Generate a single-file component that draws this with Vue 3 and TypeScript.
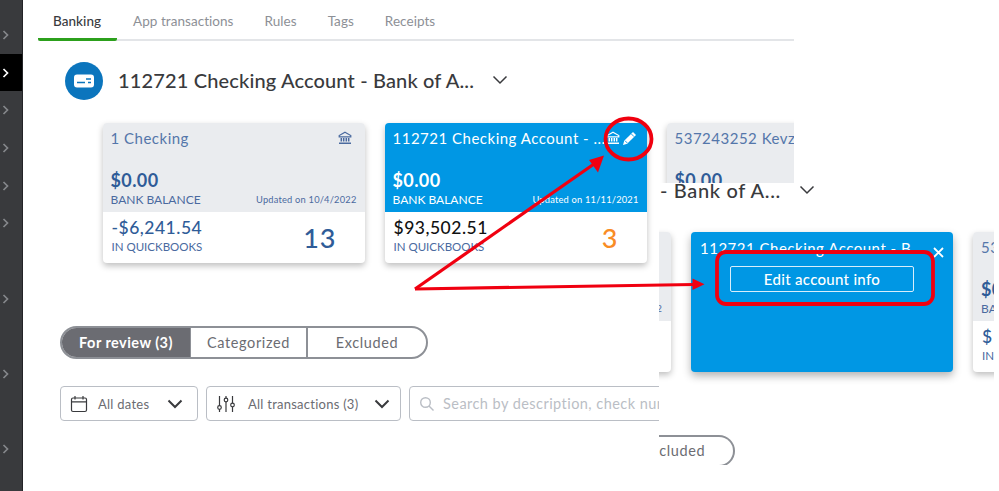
<script setup lang="ts">
const sideRows = [
  { icon: true }, { icon: true, active: true }, { icon: true }, { icon: true }, { icon: true }, { icon: true },
  { icon: false }, { icon: true }, { icon: false }, { icon: true }, { icon: false }, { icon: true },
]
const tabs = ['Banking', 'App transactions', 'Rules', 'Tags', 'Receipts']

const cards = [
  { name: '1 Checking', bank: '$0.00', updated: 'Updated on 10/4/2022', books: '-$6,241.54', count: '13', kind: '' },
  { name: '112721 Checking Account - ...', bank: '$0.00', updated: 'Updated on 11/11/2021', books: '$93,502.51', count: '3', kind: 'selected' },
  { name: '537243252 Kevz Bank', bank: '$0.00', updated: '', books: '', count: '', kind: '' },
]
</script>

<template>
  <div class="shot">
    <aside class="side">
      <div v-for="(row, i) in sideRows" :key="i" class="side-row" :class="{ active: row.active }">
        <svg v-if="row.icon" width="7" height="10" viewBox="0 0 7 10"><path d="M1.5 1l4 4-4 4" fill="none" stroke="currentColor" stroke-width="1.7" /></svg>
      </div>
    </aside>

    <main class="page">
      <nav class="tabs">
        <span v-for="(t, i) in tabs" :key="t" class="tab" :class="{ on: i === 0 }">{{ t }}</span>
      </nav>

      <div class="account">
        <div class="account-icon">
          <svg width="22" height="16" viewBox="0 0 22 16"><rect x="1" y="1.5" width="20" height="13" rx="3" fill="#fff" /><path d="M4 9.5h8M13 6h5M15 9.5h3" stroke="#0b75bd" stroke-width="1.4" /></svg>
        </div>
        <h1 class="account-name">112721 Checking Account - Bank of A...</h1>
        <svg class="account-caret" width="16" height="10" viewBox="0 0 16 10"><path d="M1.5 1.5L8 8l6.5-6.5" fill="none" stroke="#393a3d" stroke-width="1.5" /></svg>
      </div>

      <div class="cards">
        <section v-for="c in cards" :key="c.name" class="card" :class="c.kind">
          <div class="card-top">
            <div class="card-head">
              <span class="card-name">{{ c.name }}</span>
              <svg v-if="c.books" class="bank" width="14" height="14" viewBox="0 0 14 14">
                <path d="M7 1.2L12.8 4.6v1.2H1.2V4.6z" fill="none" stroke="currentColor" stroke-width="1.2" />
                <path d="M3.3 7v3.5M5.7 7v3.5M8.3 7v3.5M10.7 7v3.5M1 12.3h12" stroke="currentColor" stroke-width="1.5" />
              </svg>
              <svg v-if="c.kind" class="pencil" width="15" height="15" viewBox="0 0 15 15">
                <path d="M11 1l3 3-8.8 8.8L1 14l1.2-4.2z" fill="#fff" />
                <path d="M9.3 2.9l2.8 2.8M3 9.7l2.3 2.3" stroke="#0097e4" stroke-width="0.9" />
              </svg>
            </div>
            <div class="bank-sum">{{ c.bank }}</div>
            <div class="bank-row">
              <span>BANK BALANCE</span>
              <span class="updated">{{ c.updated }}</span>
            </div>
          </div>
          <div class="card-bottom">
            <div>
              <div class="books-sum">{{ c.books }}</div>
              <div class="books-label">IN QUICKBOOKS</div>
            </div>
            <div class="count">{{ c.count }}</div>
          </div>
        </section>
      </div>

      <div class="seg">
        <span class="seg-item on">For review (3)</span>
        <span class="seg-item mid">Categorized</span>
        <span class="seg-item last">Excluded</span>
      </div>

      <div class="filters">
        <div class="filter dates">
          <svg width="18" height="18" viewBox="0 0 18 18"><rect x="1.5" y="3" width="15" height="13.5" rx="1.5" fill="none" stroke="#393a3d" stroke-width="1.2" /><path d="M1.5 6.8h15M5 1v3.5M13 1v3.5" stroke="#393a3d" stroke-width="1.2" /></svg>
          <span>All dates</span>
          <svg class="caret" width="16" height="10" viewBox="0 0 16 10"><path d="M1.5 1.5L8 8l6.5-6.5" fill="none" stroke="#393a3d" stroke-width="2" /></svg>
        </div>
        <div class="filter trans">
          <svg width="20" height="18" viewBox="0 0 20 18"><path d="M3.5 1v16M10 1v16M16.5 1v16" stroke="#393a3d" stroke-width="1.2" /><circle cx="3.5" cy="12.5" r="1.8" fill="#fff" stroke="#393a3d" stroke-width="1.2" /><circle cx="10" cy="5" r="1.8" fill="#fff" stroke="#393a3d" stroke-width="1.2" /><circle cx="16.5" cy="10" r="1.8" fill="#fff" stroke="#393a3d" stroke-width="1.2" /></svg>
          <span>All transactions (3)</span>
          <svg class="caret" width="16" height="10" viewBox="0 0 16 10"><path d="M1.5 1.5L8 8l6.5-6.5" fill="none" stroke="#393a3d" stroke-width="2" /></svg>
        </div>
        <div class="filter search">
          <svg width="16" height="16" viewBox="0 0 16 16"><circle cx="6.5" cy="6.5" r="4.8" fill="none" stroke="#babec5" stroke-width="1.4" /><path d="M10 10l4.5 4.5" stroke="#babec5" stroke-width="1.4" /></svg>
          <span>Search by description, check number, amount</span>
        </div>
      </div>
    </main>

    <!-- second screenshot pasted over the first one -->
    <div class="paste">
      <div class="paste-head">
        <span>- Bank of A...</span>
        <svg width="16" height="10" viewBox="0 0 16 10"><path d="M1.5 1.5L8 8l6.5-6.5" fill="none" stroke="#393a3d" stroke-width="1.5" /></svg>
      </div>
      <div class="paste-cards">
        <section class="card ghost-left">
          <div class="card-top"><div class="bank-row"><span></span><span class="updated">2</span></div></div>
          <div class="card-bottom"></div>
        </section>
        <section class="card open">
          <div class="open-name">112721 Checking Account - B</div>
          <svg class="close" width="11" height="11" viewBox="0 0 11 11"><path d="M1 1l9 9M10 1l-9 9" stroke="#fff" stroke-width="1.8" /></svg>
          <button class="edit">Edit account info</button>
        </section>
        <section class="card ghost-right">
          <div class="card-top">
            <div class="card-head"><span class="card-name">53</span></div>
            <div class="bank-sum">$0</div>
            <div class="bank-row"><span>BA</span></div>
          </div>
          <div class="card-bottom">
            <div>
              <div class="books-sum">$</div>
              <div class="books-label">IN</div>
            </div>
          </div>
        </section>
      </div>
      <div class="paste-seg">Excluded</div>
    </div>

    <svg class="marks" width="999" height="491" viewBox="0 0 999 491">
      <ellipse cx="628.5" cy="139" rx="23" ry="20.5" fill="none" stroke="#f0000f" stroke-width="3.8" />
      <path d="M415 289L594 164" stroke="#f00010" stroke-width="3.2" />
      <path d="M604 155.5L589 160L598 172.5z" fill="#f00010" />
      <path d="M415 289L694 284.5" stroke="#f00010" stroke-width="3.2" />
      <path d="M704.5 284.3L692.5 278.5L692.5 290z" fill="#f00010" />
      <rect x="717" y="252" width="216" height="52" rx="9" fill="none" stroke="#f0000f" stroke-width="3.8" />
    </svg>
  </div>
</template>

<style scoped>
.shot {
  position: relative;
  width: 999px;
  height: 491px;
  display: flex;
  overflow: hidden;
  background: #fff;
  color: #393a3d;
  font-family: Lato, "Open Sans", sans-serif;
}
.side {
  width: 22px;
  height: 475px;
  flex: none;
  padding-top: 16px;
  background: #393a3d;
  border-right: 1px solid #232427;
}
.side-row {
  height: 37.7px;
  display: flex;
  align-items: center;
  justify-content: center;
  color: #85878b;
}
.side-row svg {
  margin-left: -12px;
}
.side-row.active {
  background: #000;
  color: #fff;
}
.page {
  width: 771px;
  flex: none;
  padding-left: 15px;
  box-sizing: border-box;
  overflow: hidden;
}
.tabs {
  display: flex;
  height: 41px;
  box-sizing: border-box;
  border-bottom: 2px solid #e3e5e8;
  font-size: 13.5px;
  letter-spacing: 0.05px;
  color: #8d9096;
}
.tab {
  padding: 13px 15px 0;
  margin-right: 1px;
  height: 41px;
  box-sizing: border-box;
}
.tab.on {
  color: #393a3d;
  font-weight: 500;
  border-bottom: 3px solid #2ca01c;
  border-radius: 2px;
  min-width: 79px;
}
.account {
  display: flex;
  align-items: center;
  margin: 21px 0 0 27px;
  height: 38px;
}
.account-icon {
  width: 38px;
  height: 38px;
  border-radius: 50%;
  background: #0b75bd;
  display: flex;
  align-items: center;
  justify-content: center;
}
.account-name {
  margin: -2px 0 0 15px;
  font-size: 20px;
  font-weight: 500;
  letter-spacing: 0.15px;
  white-space: nowrap;
}
.account-caret {
  margin: -2px 0 0 18px;
}
.cards {
  display: flex;
  gap: 20px;
  margin: 23px 0 0 64.5px;
}
.card {
  width: 262px;
  height: 140px;
  flex: none;
  border-radius: 4px;
  overflow: hidden;
  background: #fff;
  box-shadow: 0 3px 6px rgba(0, 0, 0, 0.25);
  box-sizing: border-box;
}
.card-top {
  height: 89px;
  padding: 5px 8px 0;
  box-sizing: border-box;
  background: #eaecef;
  color: #4a6a9f;
}
.card-head {
  display: flex;
  align-items: center;
  height: 19px;
}
.card-name {
  flex: 1;
  min-width: 0;
  font-size: 15px;
  letter-spacing: 0.5px;
  white-space: nowrap;
  color: #5476aa;
}
.bank {
  flex: none;
  margin: 1px 5px 0 0;
  color: #4a6a9f;
}
.pencil {
  flex: none;
  margin: 1px 2px 0 -3px;
}
.bank-sum {
  margin-top: 23px;
  font-size: 18px;
  font-weight: 700;
  letter-spacing: 0.4px;
  line-height: 21px;
  color: #2f5c98;
}
.bank-row {
  display: flex;
  justify-content: space-between;
  align-items: center;
  height: 16px;
  font-size: 12px;
}
.updated {
  font-size: 9.3px;
  letter-spacing: 0.2px;
}
.card-bottom {
  height: 51px;
  padding: 0 28px 2px 9px;
  box-sizing: border-box;
  display: flex;
  justify-content: space-between;
  align-items: center;
}
.books-sum {
  font-size: 17.5px;
  font-weight: 500;
  letter-spacing: 0.5px;
  line-height: 20px;
  color: #2f5c98;
}
.books-label {
  margin-top: 1px;
  font-size: 11.5px;
  color: #4a6a9f;
  line-height: 16px;
}
.count {
  margin-top: 2px;
  font-size: 27px;
  font-weight: 500;
  color: #2f5c98;
  letter-spacing: 1px;
}
.card.selected .card-top {
  background: #0097e4;
  color: #fff;
}
.card.selected .card-name,
.card.selected .bank,
.card.selected .bank-sum {
  color: #fff;
}
.card.selected .books-sum {
  color: #111;
}
.card.selected .count {
  color: #f98c25;
}
.seg {
  display: flex;
  width: 368px;
  height: 33px;
  margin: 63px 0 0 22px;
  box-sizing: border-box;
  border: 2px solid #8d9096;
  border-radius: 17px;
  overflow: hidden;
  font-size: 14.5px;
  letter-spacing: 0.6px;
  color: #6b6c72;
}
.seg-item {
  display: flex;
  align-items: center;
  justify-content: center;
}
.seg-item.on {
  width: 128px;
  background: #6b6c72;
  color: #fff;
  font-weight: 700;
  letter-spacing: 0.45px;
}
.seg-item.mid {
  width: 118px;
  border-left: 1px solid #8d9096;
  border-right: 2px solid #8d9096;
  box-sizing: border-box;
}
.seg-item.last {
  flex: 1;
}
.filters {
  display: flex;
  gap: 8px;
  margin: 27px 0 0 22px;
  font-size: 13px;
  letter-spacing: 0.25px;
  color: #6b6c72;
}
.filter {
  height: 35px;
  flex: none;
  display: flex;
  align-items: center;
  box-sizing: border-box;
  border: 1px solid #babec5;
  border-radius: 4px;
}
.filter.dates {
  width: 138px;
  padding: 0 14px 0 9px;
}
.filter.dates span {
  margin-left: 10px;
}
.filter.trans {
  width: 195px;
  padding: 0 10px 0 9px;
}
.filter.trans span {
  margin-left: 12px;
  white-space: nowrap;
}
.caret {
  margin-left: auto;
}
.filter.search {
  width: 420px;
  padding: 0 9px;
  font-size: 14.5px;
  letter-spacing: 0.45px;
  color: #babec5;
}
.filter.search span {
  margin-left: 8px;
  white-space: nowrap;
}
.paste {
  position: absolute;
  left: 659px;
  top: 183px;
  width: 335px;
  height: 282px;
  background: #fff;
  overflow: hidden;
}
.paste-head {
  display: flex;
  align-items: center;
  height: 14px;
  padding-left: 1px;
  font-size: 20px;
  font-weight: 500;
  letter-spacing: 0.65px;
  white-space: nowrap;
}
.paste-head svg {
  margin-left: 18px;
}
.paste-cards {
  display: flex;
  gap: 20px;
  margin: 35px 0 0 -250px;
}
.ghost-left .card-top {
  padding: 68px 9px 0 0;
}
.open {
  position: relative;
  background: #0097e4;
  color: #fff;
  padding: 7px 9px;
  box-shadow: 0 4px 8px rgba(0, 0, 0, 0.3);
}
.open-name {
  font-size: 15px;
  letter-spacing: 0.5px;
  white-space: nowrap;
  height: 20px;
  overflow: hidden;
}
.close {
  position: absolute;
  right: 9px;
  top: 15px;
}
.edit {
  display: block;
  width: 184px;
  height: 26px;
  margin: 7px 0 0 30px;
  padding: 0;
  background: transparent;
  border: 1px solid #d9eefb;
  border-radius: 2px;
  color: #fff;
  font: inherit;
  font-size: 15px;
  font-weight: 500;
  letter-spacing: 0.3px;
}
.paste-seg {
  width: 120px;
  height: 32px;
  margin: 63px 0 0 -44px;
  box-sizing: border-box;
  border: 2px solid #8d9096;
  border-left: 0;
  border-radius: 0 17px 17px 0;
  font-size: 14.5px;
  letter-spacing: 0.6px;
  color: #6b6c72;
  text-align: center;
  line-height: 28px;
}
.marks {
  position: absolute;
  left: 0;
  top: 0;
  pointer-events: none;
}
</style>
